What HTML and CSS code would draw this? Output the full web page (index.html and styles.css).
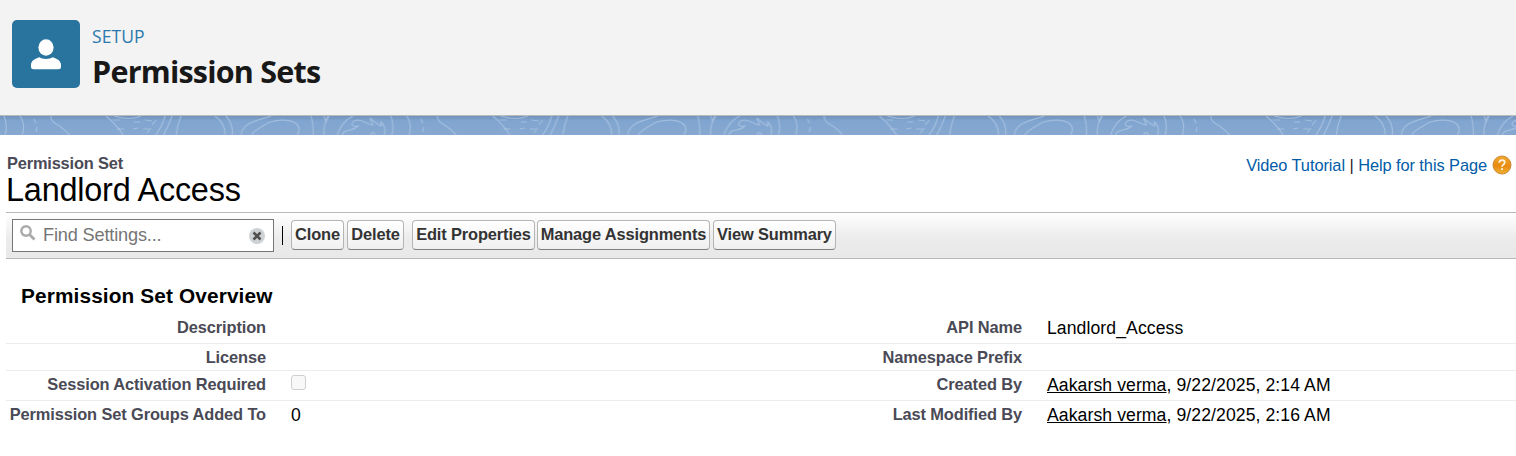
FILE: index.html
```html
<!DOCTYPE html>
<html lang="en">
<head>
<meta charset="utf-8">
<title>Permission Sets</title>
<link rel="stylesheet" href="styles.css">
</head>
<body>
<header class="page-header">
  <span class="header-icon">
    <svg width="30" height="31" viewBox="0 0 30 31" fill="#fff"><ellipse cx="15" cy="8.5" rx="7.6" ry="8.3"/><path d="M8.5 18.3C11 20.400 19 20.400 21.500 18.300C26 19.500 30 22 30 26v1.800Q30 30.300 27.300 30.300H2.700Q0 30.300 0 27.800V26C0 22 4 19.500 8.500 18.300Z"/></svg>
  </span>
  <div class="header-text">
    <span class="eyebrow">SETUP</span>
    <h1>Permission Sets</h1>
  </div>
</header>
<div class="band">
  <svg width="1516" height="20">
    <defs>
      <pattern id="topo" width="386.700" height="20" patternUnits="userSpaceOnUse">
        <g fill="none" stroke="#b4cbe8" stroke-opacity=".62" stroke-width="1.200">
          <path d="M4 0Q8 9 5 20M20 0Q26 9 22 20M51 0Q50 4 56 8Q65 13 70 20M106 0Q116 8 124 20M114 0Q130 5 141 0M165 0Q162 11 155 20M172 0Q168 11 163 20M181 0Q177 10 176 20M215 0Q226 8 225 20M226 0Q234 9 232 20M241 20C242 6 257 5 271 0M251 20C253 14 263 10 270 6C284 2 300 4 299 15L297 20M311 0Q314 10 313 20M328 0Q323 10 324 20M324 0L326 6L329 0M337 20Q341 6 353 0M342 20C343 12 353 16 358 10C350 12 350 5 358 4C364 4 368 9 373 9L370 2L376 7L381 10V6Q387 12 384 20M370 20Q372 13 376 20"/>
          <path d="M34 3l2 4M37 11l-1 5M113 4h7M124 13h-7M134 6h6M145 4l7 1M133 13l5-1M143 13h6M156 4l-4 5M151 12l-4 5"/>
        </g>
      </pattern>
    </defs>
    <rect width="1516" height="20" fill="url(#topo)"/>
  </svg>
</div>
<main class="content">
  <div class="title-row">
    <div>
      <div class="type">Permission Set</div>
      <h2 class="name">Landlord Access</h2>
    </div>
    <div class="help">
      <a>Video Tutorial</a><span class="pipe">|</span><a>Help for this Page</a>
      <svg width="20" height="20" viewBox="0 0 20 20"><defs><linearGradient id="orange" x2="0" y2="1"><stop offset="0" stop-color="#f3a72f"/><stop offset=".55" stop-color="#e88b10"/><stop offset="1" stop-color="#efb033"/></linearGradient></defs><circle cx="10" cy="10" r="9" fill="url(#orange)" stroke="#c98a35"/><path d="M7.300 7.700Q7.500 5.200 10.100 5.200Q12.700 5.200 12.700 7.500Q12.700 8.900 11.200 9.700Q10.100 10.300 10.100 11.800M10.100 13.300v1.700" fill="none" stroke="#fff5dc" stroke-width="1.800"/></svg>
    </div>
  </div>
  <div class="toolbar">
    <div class="search">
      <svg class="lens" width="16" height="17" viewBox="0 0 16 17" fill="none" stroke="#aaa"><circle cx="6" cy="6" r="4.700" stroke-width="2.400"/><path d="M9.500 9.500l5 5" stroke-width="2.800"/></svg>
      <span class="placeholder">Find Settings...</span>
      <svg width="16" height="16" viewBox="0 0 16 16"><circle cx="8" cy="8" r="8" fill="#ced2d4"/><path d="M4.500 4.500l7 7M11.500 4.500l-7 7" stroke="#505050" stroke-width="2.600"/></svg>
    </div>
    <span class="divider"></span>
    <button class="clone">Clone</button>
    <button class="delete">Delete</button>
    <button class="edit">Edit Properties</button>
    <button class="manage">Manage Assignments</button>
    <button class="summary">View Summary</button>
  </div>
  <h3>Permission Set Overview</h3>
  <div class="details">
    <div class="row r1"><span class="label">Description</span><span class="value"></span><span class="label">API Name</span><span class="value">Landlord_Access</span></div>
    <div class="row r2"><span class="label">License</span><span class="value"></span><span class="label">Namespace Prefix</span><span class="value"></span></div>
    <div class="row r3"><span class="label">Session Activation Required</span><span class="value"><i class="check"></i></span><span class="label">Created By</span><span class="value"><u>Aakarsh verma</u>, 9/22/2025, 2:14 AM</span></div>
    <div class="row r4"><span class="label">Permission Set Groups Added To</span><span class="value">0</span><span class="label">Last Modified By</span><span class="value"><u>Aakarsh verma</u>, 9/22/2025, 2:16 AM</span></div>
  </div>
</main>
</body>
</html>
```
FILE: styles.css
```css
* { box-sizing: border-box; }
body { margin: 0; background: #fff; color: #000; font-family: "Liberation Sans", Arial, sans-serif; overflow: hidden; }
h1, h2, h3 { margin: 0; }
svg { display: block; flex: none; }
.page-header { height: 116px; padding: 20px 12px; display: flex; gap: 12px; background: #f3f3f3; border-bottom: 1px solid #b8bbb9; }
.header-icon { width: 68px; height: 68px; border-radius: 5px; background: #29749f; display: flex; justify-content: center; padding-top: 19px; }
.header-text { display: flex; flex-direction: column; font-family: "Open Sans", "Noto Sans", sans-serif; padding-top: 3px; }
.eyebrow { font-size: 17.500px; line-height: 26px; color: #2b78ad; letter-spacing: 0.100px; }
.header-text h1 { font-size: 30.500px; line-height: 42px; color: #181818; letter-spacing: -0.770px; white-space: nowrap; margin-top: 1px; }
.band { height: 19px; background: linear-gradient(#7193bb, #80a5d0 5px, #87a8d0); overflow: hidden; }
.content { padding-left: 6px; }
.title-row { height: 77px; padding: 18px 4px 0 1px; display: flex; justify-content: space-between; }
.type { font-size: 16.400px; line-height: 20px; font-weight: bold; color: #4a4a56; letter-spacing: -0.180px; }
.name { font-size: 32.400px; line-height: 34px; font-weight: normal; margin-left: -1px; white-space: nowrap; letter-spacing: -0.200px; }
.help { display: flex; height: 24px; align-items: center; font-size: 16.400px; letter-spacing: -0.080px; color: #015ba7; }
.help .pipe { color: #222; margin: 0 4.500px; }
.help svg { margin-left: 5px; }
.toolbar { height: 47px; border-top: 1px solid #b7b7b7; border-bottom: 1px solid #b7b7b7; background: linear-gradient(#fff, #ececec 55%, #e8e8e8); display: flex; padding: 6px 6px 0; }
.search { width: 262px; height: 33px; border: 1px solid #767676; background: #fff; display: flex; align-items: center; padding: 0 8px 0 7px; }
.lens { margin-top: -5px; }
.placeholder { flex: 1; padding-left: 7px; font-size: 18.200px; letter-spacing: -0.180px; color: #757575; }
.divider { width: 1px; height: 19px; background: #000; margin: 7px 8px 0; }
.toolbar button { height: 30px; margin: 1px 3px 0 0; padding: 0 0 2px; font: bold 16.400px/26px "Liberation Sans", Arial, sans-serif; letter-spacing: -0.130px; color: #333; border: 1px solid #b5b5b5; border-bottom-color: #7f7f7f; border-radius: 4px; background: linear-gradient(#fff, #f0f0f0); white-space: nowrap; }
.toolbar .clone { width: 53px; }
.toolbar .delete { width: 57px; margin-right: 8px; }
.toolbar .edit { width: 123px; margin-right: 2px; }
.toolbar .manage { width: 173px; }
.toolbar .summary { width: 123px; }
h3 { font-size: 20.800px; line-height: 26px; margin: 24px 0 0 15px; letter-spacing: 0.130px; }
.details { margin-top: 5px; }
.row { display: grid; grid-template-columns: 260px 496px 260px 494px; border-bottom: 1px solid #ececec; white-space: nowrap; padding-top: 4px; }
.label { text-align: right; font-weight: bold; font-size: 16.400px; line-height: 18px; letter-spacing: -0.110px; color: #4a4a56; }
.value { padding-left: 25px; font-size: 17.600px; line-height: 20px; letter-spacing: 0.090px; }
.r1 { height: 30px; }
.r2 { height: 27px; }
.r3 { height: 30px; }
.r4 { height: 30px; border-bottom: 0; }
.check { display: block; width: 15px; height: 15px; border: 1px solid #cfcfcf; border-radius: 3px; background: #f8f8f8; }
```
